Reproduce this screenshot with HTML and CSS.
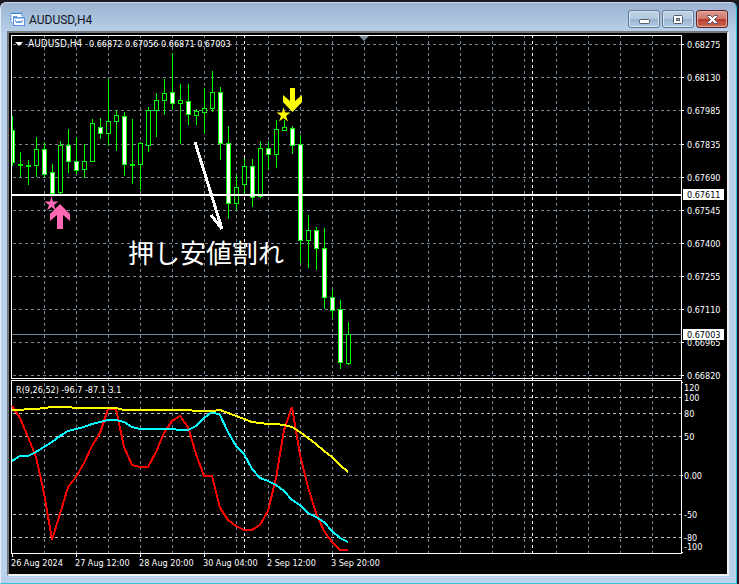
FILE: index.html
```html
<!DOCTYPE html>
<html lang="ja">
<head>
<meta charset="utf-8">
<title>AUDUSD,H4</title>
<link rel="stylesheet" href="styles.css">
</head>
<body>
<main class="window">
  <header class="titlebar">
    <svg class="app-icon" viewBox="0 0 15 15" aria-hidden="true">
      <rect x="1" y="1" width="11" height="9" fill="#fff" stroke="#4a86dc" stroke-dasharray="2 1"/>
      <path d="M1 1.5h11" stroke="#4a86dc" stroke-width="1"/>
      <path d="M3 6l1-2 1 2 1-2 1 1" fill="none" stroke="#4a86dc"/>
      <rect x="3.500" y="5.500" width="11" height="8" fill="#fff" stroke="#5b93e2"/>
      <path d="M3 6h12" stroke="#5b93e2" stroke-width="1"/>
      <path d="M5 8l2 3 1-2 1 2 1-2 1 2 2-3" fill="none" stroke="#4a86dc"/>
    </svg>
    <h1 class="title">AUDUSD,H4</h1>
    <div class="controls">
      <button class="control" type="button" aria-label="Minimize">
        <svg viewBox="0 0 13 11"><rect x="1.500" y="5.500" width="10" height="4" rx="1" fill="#fff" stroke="#555e6b"/></svg>
      </button>
      <button class="control" type="button" aria-label="Maximize">
        <svg viewBox="0 0 13 11"><rect x="1.500" y="1.500" width="9" height="8" rx="1" fill="#fff" stroke="#555e6b"/><rect x="4.500" y="4.500" width="3" height="2" fill="#9fb8d2" stroke="#555e6b"/></svg>
      </button>
      <button class="control control-close" type="button" aria-label="Close">
        <svg viewBox="0 0 13 11"><path d="M1.500 1.500h3l2 2 2-2h3v1l-3 3 3 3v1h-3l-2-2-2 2h-3v-1l3-3-3-3z" fill="#fff" stroke="#555064"/></svg>
      </button>
    </div>
  </header>
  <section class="client">
    <svg class="chart" viewBox="9 33 718 541" role="img" aria-label="AUDUSD,H4">
      <g id="grid" class="crisp"></g>
      <g class="frame crisp">
        <rect x="11.500" y="35.500" width="670" height="343"/>
        <rect x="11.500" y="380.500" width="670" height="173"/>
      </g>
      <path class="bid crisp" d="M12 334.500h670"/>
      <g id="candles" class="crisp"></g>
      <path class="level crisp" d="M12 195h670"/>
      <path class="note-line crisp" d="M195 142L222 229M211 215L222 229"/>
      <g id="lines" class="crisp"></g>
      <g class="sell">
        <path d="M290 88h5v13l7-6v7l-9.500 10-9.500-10v-7l7 6z"/>
        <path d="M283.500 107l1.500 5.500h5.500l-4.500 3.500 2 5.500-4.500-3.500-4.500 3.500 2-5.500-4.500-3.500h5.500z"/>
      </g>
      <g class="buy">
        <path d="M57 229h6v-14l7 6v-7l-10-10-10 10v7l7-6z"/>
        <path d="M51.500 196l1.500 5.500h5.500l-4.500 3.500 2 5.500-4.500-3.500-4.500 3.500 2-5.500-4.500-3.500h5.500z"/>
      </g>
      <path class="shift" d="M359 36h10l-5 5z"/>
      <path class="menu" d="M15 42h8l-4 4z"/>
      <text class="note" x="128" y="263">押し安値割れ</text>
      <g id="labels" class="labels">
        <text class="symbol" x="28" y="47">AUDUSD,H4</text>
        <text x="89" y="47">0.66872 0.67056 0.66871 0.67003</text>
        <text x="16" y="393">R(9,26,52) -96.7 -87.1 3.1</text>
      </g>
      <g class="tags">
        <rect x="683" y="189" width="41" height="11"/>
        <rect x="683" y="329" width="41" height="11"/>
        <text x="687" y="198">0.67611</text>
        <text x="687" y="338">0.67003</text>
      </g>
    </svg>
  </section>
</main>
<script src="chart.js"></script>
</body>
</html>
```
FILE: styles.css
```css
* { box-sizing: border-box; }
body { margin: 0; background: #1c1a20; }
.window {
  margin: 2px 2px 0 0;
  padding: 0 7px 7px 6px;
  border: 1px solid #e4eefa;
  border-top-color: #c9d8e8;
  border-right-color: #35c3dc;
  border-bottom-color: #35c3dc;
  border-radius: 6px 6px 0 0;
  background: linear-gradient(#9ab3d0 0, #b9d1ea 30px, #b9d1ea 100%);
}
.titlebar {
  display: flex;
  align-items: center;
  height: 28px;
  padding-left: 3px;
}
.app-icon { width: 15px; height: 15px; margin-top: 4px; }
.title {
  flex: 1;
  margin: 5px 0 0 4px;
  font: 12px/16px Roboto, "Noto Sans", sans-serif;
  color: #10151c;
}
.controls { display: flex; gap: 2px; margin: 4px 1px 0 0; }
.control {
  display: flex;
  align-items: center;
  justify-content: center;
  width: 32px;
  height: 18px;
  padding: 0;
  border: 1px solid #64798f;
  border-radius: 3px;
  background: linear-gradient(#c0d2e6 0, #b3c8df 48%, #98b2ce 50%, #b3cbe4 100%);
  box-shadow: inset 0 0 0 1px #d5e3f2;
}
.control svg { width: 13px; height: 11px; }
.control-close {
  border-color: #59202a;
  background: linear-gradient(#dc9d91 0, #cf7263 48%, #b8392a 50%, #cd6b50 100%);
  box-shadow: inset 0 0 0 1px #e5aaa0;
}
.client {
  border: 2px solid #f5f3f0;
  border-top-color: #74777b;
  border-left-color: #74777b;
  background: #000;
}
.chart { display: block; width: 100%; height: auto; }
.crisp { shape-rendering: crispEdges; }
.grid { fill: none; stroke: #778899; stroke-dasharray: 3 3; }
.grid-level { stroke: #c0c0c0; }
.grid-day { stroke: #fff; }
.frame { fill: none; stroke: #fff; }
.bid { stroke: #778899; }
.level { stroke: #fff; stroke-width: 2; }
.note-line { fill: none; stroke: #fff; stroke-width: 3; }
.wick { fill: #0f0; }
.candle { fill: #000; stroke: #0f0; }
.candle-down { fill: #fff; }
.line { fill: none; stroke-width: 2; }
.line-short { stroke: #f00; }
.line-mid { stroke: #0ff; }
.line-long { stroke: #ff0; }
.sell { fill: #ff0; }
.buy { fill: #ff69b4; }
.shift { fill: #778899; }
.menu { fill: #fff; }
.note { fill: #fff; font: 26px "Noto Sans CJK JP", sans-serif; }
.labels text { fill: #fff; }
.labels text, .tags text { font: 9px "DejaVu Sans Condensed", "Noto Sans", sans-serif; }
.labels .symbol { font-size: 10px; }
.tags rect { fill: #fff; }
.tags text { fill: #000; }
```
FILE: chart.js
```js
const NS = 'http://www.w3.org/2000/svg';
function add(parent, tag, attrs, text) {
  const el = document.createElementNS(NS, tag);
  for (const key in attrs) el.setAttribute(key, attrs[key]);
  if (text) el.textContent = text;
  document.getElementById(parent).appendChild(el);
}

// Grid
for (let x = 44; x < 681; x += 32) add('grid', 'path', { class: 'grid', d: `M${x}.5 35V553` });
for (let y of [44, 77, 110, 144, 177, 210, 243, 276, 309, 342, 375, 475])
  add('grid', 'path', { class: 'grid', d: `M13 ${y}.5H681` });
for (let y of [397, 413, 436, 514, 537])
  add('grid', 'path', { class: 'grid grid-level', d: `M13 ${y}.5H681` });
for (let x of [244, 532]) add('grid', 'path', { class: 'grid grid-day', d: `M${x}.5 35V553` });

// Candles: high, body top, body bottom, low, 1 = falling
const bars = [
  [116,130,163,166,1],[152,164,165,177,0],[160,165,166,185,0],[137,149,166,177,0],
  [142,149,175,177,1],[164,172,194,194,1],[141,145,193,194,0],[129,145,162,173,1],
  [137,161,171,174,1],[144,161,170,178,0],[119,123,162,162,0],[118,127,134,139,1],
  [79,121,134,146,0],[110,115,122,151,0],[112,116,165,176,1],[119,164,165,184,0],
  [142,143,165,190,0],[107,110,146,152,0],[93,100,111,137,0],[79,93,101,115,0],
  [53,92,104,110,1],[84,100,104,144,0],[84,101,115,125,1],[109,111,116,125,0],
  [88,108,113,134,0],[71,92,109,112,0],[87,92,144,160,1],[126,143,204,219,1],
  [175,187,204,210,0],[158,166,185,195,0],[159,166,198,207,1],[141,148,197,198,0],
  [141,148,155,170,1],[120,129,155,168,0],[120,127,131,131,0],[126,128,146,154,1],
  [135,144,241,263,1],[215,230,241,268,0],[227,230,249,270,1],[228,248,298,309,1],
  [290,297,311,318,1],[300,309,363,369,1],[322,334,364,365,0]
];
bars.forEach(([high, top, bottom, low, down], i) => {
  const x = 12 + i * 8;
  const left = Math.max(x - 2, 12);
  add('candles', 'rect', { class: 'wick', x, y: high, width: 1, height: low - high });
  if (bottom - top < 2)
    add('candles', 'rect', { class: 'wick', x: left, y: top, width: 5, height: 2 });
  else
    add('candles', 'rect', {
      class: down ? 'candle candle-down' : 'candle',
      x: left + 0.5, y: top + 0.5, width: x + 2 - left, height: bottom - top - 1
    });
});

// Indicator lines, one value per bar
const series = {
  short: [406,418,437,457,493,540,514,487,477,463,446,433,409,409,447,465,467,467,452,433,421,416,427,454,476,476,508,520,526,530,530,525,511,478,430,407,455,487,513,531,542,550,550],
  mid: [461,456,456,452,447,442,436,431,429,427,424,422,420,420,422,427,429,429,429,429,429,430,430,426,418,412,415,432,446,454,469,478,481,485,491,500,505,513,517,522,531,538,542],
  long: [410,410,409,409,408,407,407,407,408,408,408,408,408,408,410,410,410,410,410,410,410,410,410,411,411,411,410,413,416,419,422,423,424,424,425,427,432,438,444,451,457,465,472]
};
for (const name in series)
  add('lines', 'polyline', {
    class: 'line line-' + name,
    points: series[name].map((y, i) => `${12 + i * 8},${y}`).join(' ')
  });

// Axis labels
const prices = ['0.68275','0.68130','0.67985','0.67835','0.67690','0.67545','0.67400','0.67255','0.67110','0.66965','0.66820'];
[44,77,110,144,177,210,243,276,309,342,375].forEach((y, i) => {
  add('grid', 'rect', { x: 682, y, width: 2, height: 1, fill: '#fff' });
  add('labels', 'text', { x: 687, y: y + 4 }, prices[i]);
});
[[120,391],[100,401],[80,417],[50,440],['0.00',479],[-50,518],[-80,541],[-100,550]].forEach(([t, y]) =>
  add('labels', 'text', { x: 684, y }, String(t)));
for (const y of [382, 475, 552]) add('grid', 'rect', { x: 682, y, width: 1, height: 1, fill: '#fff' });
['26 Aug 2024','27 Aug 12:00','28 Aug 20:00','30 Aug 04:00','2 Sep 12:00','3 Sep 20:00'].forEach((t, i) => {
  add('grid', 'rect', { x: 12 + i * 64, y: 554, width: 1, height: 3, fill: '#fff' });
  add('labels', 'text', { x: 11 + i * 64, y: 566 }, t);
});
```
